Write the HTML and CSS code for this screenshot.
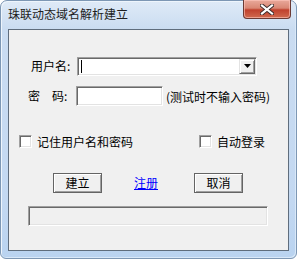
FILE: index.html
```html
<!DOCTYPE html>
<html>
<head>
<meta charset="utf-8">
<link rel="stylesheet" href="styles.css">
</head>
<body>
<div class="window">
  <div class="titlebar">
    <span class="title">珠联动态域名解析建立</span>
    <div class="close">
      <svg width="14" height="11" viewBox="0 0 14 11">
        <path d="M2 1.5 L12 9.5 M12 1.5 L2 9.5" stroke="#3a2a2a" stroke-width="4" stroke-linecap="square"/>
        <path d="M2 1.5 L12 9.5 M12 1.5 L2 9.5" stroke="#ffffff" stroke-width="2.2" stroke-linecap="square"/>
      </svg>
    </div>
  </div>
  <div class="client">
    <div class="row row-user">
      <span class="label label-user">用户名:</span>
      <div class="combo">
        <span class="caret"></span>
        <div class="drop">
          <svg width="7" height="4" viewBox="0 0 7 4"><path d="M0 0 H7 L3.5 4 Z" fill="#000"/></svg>
        </div>
      </div>
    </div>
    <div class="row row-pass">
      <span class="label label-pass">密　码:</span>
      <div class="field pass"></div>
      <span class="note">(测试时不输入密码)</span>
    </div>
    <div class="row row-check">
      <div class="check-item">
        <span class="box"></span><span>记住用户名和密码</span>
      </div>
      <div class="check-item auto">
        <span class="box"></span><span>自动登录</span>
      </div>
    </div>
    <div class="row row-buttons">
      <div class="btn">建立</div>
      <a class="link" href="#">注册</a>
      <div class="btn">取消</div>
    </div>
    <div class="status"></div>
  </div>
</div>
</body>
</html>
```
FILE: styles.css
```css
* { box-sizing: border-box; }
html, body { margin: 0; padding: 0; background: #ffffff; }
body {
  width: 297px;
  height: 259px;
  font-family: "Noto Sans CJK SC", "DejaVu Sans", sans-serif;
  font-size: 12px;
  color: #000;
}
.window {
  width: 297px;
  height: 259px;
  border: 1px solid #7d97b4;
  border-radius: 7px 7px 6px 6px;
  background: linear-gradient(to bottom, #dfeaf7 0px, #cadcf1 28px, #c3d8f1 200px, #b9d3f0 259px);
  box-shadow: inset 1px 1px 0 #eef5fc, inset -1px -1px 0 #d9e8f8;
  padding: 0 7px 7px 7px;
  display: flex;
  flex-direction: column;
}
.titlebar {
  height: 28px;
  display: flex;
  align-items: flex-start;
}
.title {
  margin-left: 0px;
  margin-top: 5px;
  line-height: 16px;
  font-size: 12px;
  color: #1e1e1e;
  letter-spacing: 0;
}
.close {
  margin-left: auto;
  margin-top: -1px;
  margin-right: -2px;
  width: 48px;
  height: 19px;
  border: 1px solid #6b3a34;
  border-top: none;
  border-radius: 0 0 4px 4px;
  background: linear-gradient(to bottom, #e9a99b 0%, #d98774 45%, #c0412d 55%, #d06a4f 100%);
  box-shadow: inset 0 0 0 1px rgba(255,200,190,0.6);
  display: flex;
  align-items: center;
  justify-content: center;
}
.close svg { display: block; }
.client {
  flex: 1;
  border: 1px solid #5f6d7d;
  background: #f0f0f0;
  display: flex;
  flex-direction: column;
}
.row {
  display: flex;
  align-items: center;
}
.label {
  white-space: pre;
  line-height: 20px;
}
.row-user {
  margin-top: 26px;
  padding-left: 22px;
  height: 20px;
}
.label-user { width: 46px; }
.combo {
  width: 180px;
  height: 19px;
  background: #fff;
  border-top: 1px solid #a0a0a0;
  border-left: 1px solid #a0a0a0;
  border-right: 1px solid #ffffff;
  border-bottom: 1px solid #ffffff;
  box-shadow: inset 1px 1px 0 #696969, inset -1px -1px 0 #e3e3e3;
  display: flex;
  align-items: center;
  padding: 0 1px 0 3px;
}
.caret {
  width: 1px;
  height: 13px;
  background: #000;
}
.drop {
  margin-left: auto;
  width: 16px;
  height: 15px;
  background: #f0f0f0;
  border-top: 1px solid #e3e3e3;
  border-left: 1px solid #e3e3e3;
  border-right: 1px solid #696969;
  border-bottom: 1px solid #696969;
  box-shadow: inset 1px 1px 0 #fff, inset -1px -1px 0 #a0a0a0;
  display: flex;
  align-items: center;
  justify-content: center;
}
.drop svg { display: block; }
.row-pass {
  margin-top: 10px;
  padding-left: 19px;
  height: 20px;
}
.label-pass { width: 48px; }
.field {
  background: #fff;
  border-top: 1px solid #a0a0a0;
  border-left: 1px solid #a0a0a0;
  border-right: 1px solid #ffffff;
  border-bottom: 1px solid #ffffff;
  box-shadow: inset 1px 1px 0 #696969, inset -1px -1px 0 #e3e3e3;
}
.pass {
  width: 87px;
  height: 20px;
}
.note {
  margin-left: 3px;
  white-space: nowrap;
}
.row-check {
  margin-top: 29px;
  padding-left: 10px;
  height: 13px;
}
.check-item {
  display: flex;
  align-items: center;
  gap: 5px;
  line-height: 13px;
}
.check-item.auto { margin-left: 66px; }
.box {
  width: 13px;
  height: 13px;
  background: #fff;
  border-top: 1px solid #a0a0a0;
  border-left: 1px solid #a0a0a0;
  border-right: 1px solid #ffffff;
  border-bottom: 1px solid #ffffff;
  box-shadow: inset 1px 1px 0 #696969, inset -1px -1px 0 #e3e3e3;
}
.row-buttons {
  margin-top: 25px;
  padding-left: 44px;
  height: 20px;
}
.btn {
  width: 49px;
  height: 20px;
  border: 1px solid #646464;
  box-shadow: inset 1px 1px 0 #ffffff, inset -1px -1px 0 #a0a0a0;
  background: #f0f0f0;
  display: flex;
  align-items: center;
  justify-content: center;
  line-height: 16px;
}
.link {
  color: #0000ff;
  text-decoration: underline;
  margin-left: 32px;
  margin-right: 36px;
  line-height: 16px;
}
.status {
  margin-top: 13px;
  margin-left: 19px;
  width: 240px;
  height: 20px;
  border-top: 1px solid #a0a0a0;
  border-left: 1px solid #a0a0a0;
  border-right: 1px solid #ffffff;
  border-bottom: 1px solid #ffffff;
  box-shadow: inset 1px 1px 0 #696969, inset -1px -1px 0 #e3e3e3;
  background: #f0f0f0;
}
```
